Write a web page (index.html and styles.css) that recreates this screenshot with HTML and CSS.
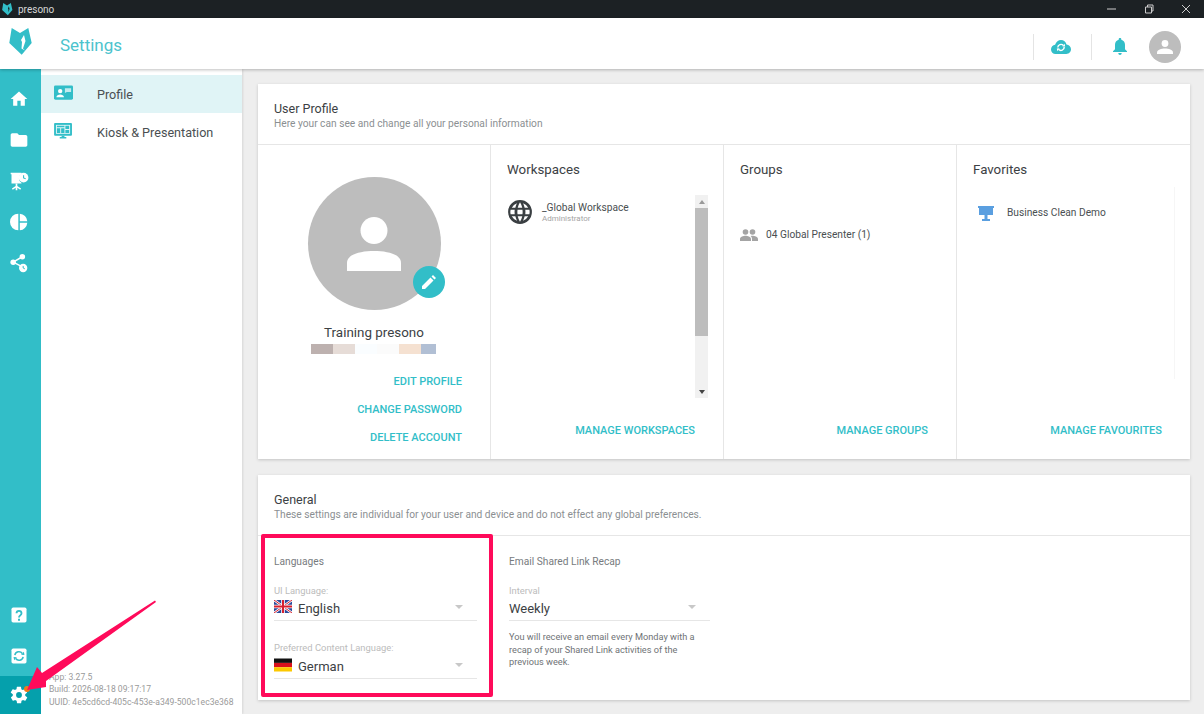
FILE: index.html
```html
<!DOCTYPE html>
<html lang="en">
<head>
    <meta charset="UTF-8">
    <meta name="viewport" content="width=device-width, initial-scale=1.0">
    <title>presono - Settings</title>
    <link rel="stylesheet" href="styles.css">
</head>
<body>

<div class="titlebar">
    <div class="titlebar-app">
        <svg class="titlebar-logo" viewBox="0 0 24 28"><path fill="#32bec8" d="M2.700 0L11 5l8.300-5 3.400 15-10 11.700L.3 15z"/><path fill="#1c2124" d="M15 7l1.500 6-2.500 7 0-6-1-2z"/></svg>
        <span>presono</span>
    </div>
    <div class="titlebar-controls">
        <svg viewBox="0 0 10 10"><path d="M0 5h9" stroke="#ccc" fill="none"/></svg>
        <svg viewBox="0 0 10 10"><path d="M1.500 3h6v6h-6zM3.500 3V1h5.500v6H7.500" stroke="#ccc" fill="none"/></svg>
        <svg viewBox="0 0 10 10"><path d="M1 1l8 8M9 1l-8 8" stroke="#ccc" fill="none"/></svg>
    </div>
</div>

<header class="topbar">
    <div class="topbar-left">
        <svg class="topbar-logo" viewBox="0 0 24 28"><path fill="#32bec8" d="M2.700 0L11 5l8.300-5 3.400 15-10 11.700L.3 15z"/><path fill="#fff" d="M15 7l1.500 6-2.500 7.500 2 2-3.500-2 .5-6.500-1-2z"/></svg>
        <h1 class="topbar-title">Settings</h1>
    </div>
    <div class="topbar-right">
        <div class="topbar-item topbar-cloud">
            <svg width="20" height="14" viewBox="0 0 20 14"><path fill="#32bec8" d="M10 0c2.700 0 5 1.900 5.500 4.600 2.500.2 4.500 2.200 4.500 4.700C20 11.900 17.900 14 15.300 14H4.500C2 14 0 12 0 9.400c0-2.400 1.800-4.300 4.100-4.600C5.200 2 7.400 0 10 0z"/><path fill="none" stroke="#fff" stroke-width="1.400" d="M6.800 7.500a3.200 3.200 0 0 1 5.600-2M13.200 7a3.200 3.200 0 0 1-5.600 2.300"/><path fill="#fff" d="M11.400 6.600l2.800-.2-.6-2.700zM8.600 8.300l-2.800.2.600 2.700z"/></svg>
        </div>
        <div class="topbar-item topbar-bell">
            <svg width="14" height="17" viewBox="0 0 14 17"><path fill="#32bec8" d="M7 0c.8 0 1.300.5 1.300 1.300v.5C10.600 2.400 12 4.300 12 6.800v4.400l2 2v.8H0v-.8l2-2V6.800c0-2.500 1.400-4.400 3.700-5v-.5C5.700.5 6.200 0 7 0zM5.300 15h3.400c0 1-.7 2-1.700 2s-1.700-1-1.700-2z"/></svg>
        </div>
        <div class="avatar-small">
            <svg width="16" height="14" viewBox="0 0 16 14"><circle cx="8" cy="3.500" r="3.400" fill="#fff"/><path fill="#fff" d="M0 14v-1.500C0 9.800 4.500 8.500 8 8.500s8 1.300 8 4V14z"/></svg>
        </div>
    </div>
</header>

<div class="main">
    <nav class="rail">
        <div class="rail-top">
            <svg class="rail-icon" viewBox="0 0 24 24"><path fill="#fff" d="M10 20v-6h4v6h5v-8h3L12 3 2 12h3v8z"/></svg>
            <svg class="rail-icon" viewBox="0 0 24 24"><path fill="#fff" d="M10 4H4c-1.100 0-2 .9-2 2v12c0 1.100.9 2 2 2h16c1.100 0 2-.9 2-2V8c0-1.100-.9-2-2-2h-8z"/></svg>
            <svg class="rail-icon" viewBox="0 0 24 24"><path fill="#fff" d="M2 2h13v1.500a6 6 0 0 0 0 10.500v1H3V4H2z"/><path fill="#fff" d="M8 15h2v3l4.500 3-1 1.400L10 20v3H8v-3l-3.500 2.400-1-1.400L8 18z"/><circle cx="17.500" cy="8" r="5.800" fill="#fff"/><path fill="none" stroke="#32bec8" stroke-width="1.300" d="M17.500 5v3.300l2.500 1"/></svg>
            <svg class="rail-icon" viewBox="0 0 24 24"><path fill="#fff" d="M11.200 2v20a10 10 0 0 1 0-20zM13 2a10 10 0 0 1 9 9h-9zM13 13h9a10 10 0 0 1-9 9z"/></svg>
            <svg class="rail-icon" viewBox="0 0 24 24"><circle cx="5" cy="11" r="3.300" fill="#fff"/><circle cx="16" cy="4.500" r="3.300" fill="#fff"/><circle cx="17" cy="18" r="5" fill="#fff"/><path stroke="#fff" stroke-width="1.800" d="M5 11l11-6.500M5 11l10 5"/><path fill="none" stroke="#32bec8" stroke-width="1.200" d="M17 15.500V18l2 1"/></svg>
        </div>
        <div class="rail-bottom">
            <div class="rail-cell">
                <svg class="rail-icon" viewBox="0 0 24 24"><rect x="3" y="3" width="18" height="18" rx="2" fill="#fff"/><path fill="none" stroke="#32bec8" stroke-width="2.200" d="M9 10c0-4 6-4 6 0 0 2.500-3 2.500-3 5"/><rect x="10.800" y="16.500" width="2.400" height="2.400" fill="#32bec8"/></svg>
            </div>
            <div class="rail-cell">
                <svg class="rail-icon" viewBox="0 0 24 24"><rect x="3" y="3" width="18" height="18" rx="2" fill="#fff"/><path fill="none" stroke="#32bec8" stroke-width="1.800" d="M7 11a5 5 0 0 1 9-2M17 13a5 5 0 0 1-9 2"/><path fill="#32bec8" d="M14.500 10.500l4 .3-.6-4zM9.500 13.500l-4-.3.6 4z"/></svg>
            </div>
            <div class="rail-cell rail-cell-active">
                <svg class="rail-icon" viewBox="0 0 24 24"><path fill="#fff" d="M19.400 13c.1-.3.100-.7.100-1s0-.7-.1-1l2.100-1.600c.2-.2.200-.4.100-.6l-2-3.500c-.1-.2-.4-.3-.6-.2l-2.500 1c-.5-.4-1.100-.7-1.700-1l-.4-2.700c0-.2-.2-.4-.5-.4h-4c-.2 0-.4.2-.5.400l-.4 2.700c-.6.200-1.200.6-1.700 1l-2.500-1c-.2-.1-.5 0-.6.200l-2 3.500c-.1.200-.1.500.1.600L4.600 11c0 .3-.1.700-.1 1s0 .7.1 1l-2.100 1.600c-.2.200-.2.400-.1.600l2 3.500c.1.200.4.300.6.200l2.500-1c.5.400 1.100.7 1.700 1l.4 2.700c0 .2.200.4.500.4h4c.2 0 .5-.2.500-.4l.4-2.700c.6-.2 1.200-.6 1.700-1l2.500 1c.2.100.5 0 .6-.2l2-3.500c.1-.2.100-.5-.1-.6zM12 15.500a3.500 3.500 0 1 1 0-7 3.500 3.500 0 0 1 0 7z"/></svg>
            </div>
        </div>
    </nav>

    <aside class="side">
        <div class="side-item side-item-active">
            <svg class="side-icon" viewBox="0 0 20 16"><rect width="20" height="15" rx="1.500" fill="#32bec8"/><circle cx="6.500" cy="6" r="2.300" fill="#fff"/><path fill="#fff" d="M2.500 12.500c0-2 2.200-3 4-3s4 1 4 3z"/><path fill="#c2ebef" d="M11.500 3H18v4h-4.500l-2 1z"/></svg>
            <span>Profile</span>
        </div>
        <div class="side-item">
            <svg class="side-icon" viewBox="0 0 20 17"><rect width="19" height="13.500" rx="1" fill="#32bec8"/><rect x="2" y="2" width="15" height="9.500" fill="#e2f5f7"/><path fill="#32bec8" d="M3 3h8v1.500H3zM12 3h4v3.500h-4zM3 5.500h3.500v5H3zM7.500 5.500h3.500v5H7.500zM12 7.500h4v3h-4z"/><path fill="#32bec8" d="M8 13.500h3v1.500h2v1.500H6V15h2z"/></svg>
            <span>Kiosk &amp; Presentation</span>
        </div>
        <div class="side-info">
            <div>App: 3.27.5</div>
            <div>Build: 2026-08-18 09:17:17</div>
            <div>UUID: 4e5cd6cd-405c-453e-a349-500c1ec3e368</div>
        </div>
    </aside>

    <main class="content">
        <section class="card">
            <div class="card-head">
                <h2>User Profile</h2>
                <p>Here your can see and change all your personal information</p>
            </div>
            <div class="profile-grid">
                <div class="profile-col">
                    <div class="avatar-large">
                        <svg width="54" height="54" viewBox="0 0 54 54"><circle cx="27" cy="13.500" r="13.500" fill="#fff"/><path fill="#fff" d="M0 54v-8c0-9 14-12 27-12s27 3 27 12v8z"/></svg>
                        <div class="avatar-edit">
                            <svg width="14" height="14" viewBox="0 0 14 14"><path fill="#fff" d="M0 14v-3l8.500-8.500 3 3L3 14zM9.500 1.500 11 0l3 3-1.500 1.500z"/></svg>
                        </div>
                    </div>
                    <div class="profile-name">Training presono</div>
                    <div class="swatches">
                        <i class="swatch-1"></i><i class="swatch-2"></i><i class="swatch-3"></i><i class="swatch-4"></i><i class="swatch-5"></i><i class="swatch-6"></i>
                    </div>
                    <div class="profile-links">
                        <a>EDIT PROFILE</a>
                        <a>CHANGE PASSWORD</a>
                        <a>DELETE ACCOUNT</a>
                    </div>
                </div>

                <div class="list-col">
                    <h3>Workspaces</h3>
                    <div class="list-body">
                        <div class="workspace">
                            <svg class="workspace-icon" width="26" height="26" viewBox="0 0 24 24"><path fill="#3a3f42" d="M12 1a11 11 0 1 0 0 22 11 11 0 0 0 0-22zm7.600 7h-3.300a17 17 0 0 0-1.500-4.100A9 9 0 0 1 19.600 8zM12 3.100c.9 1.300 1.600 3 2.100 4.900H9.900c.5-1.900 1.200-3.600 2.100-4.900zM3.300 14a9 9 0 0 1 0-4h3.800a16 16 0 0 0 0 4zm1.100 2h3.300c.4 1.500.9 2.900 1.500 4.100A9 9 0 0 1 4.400 16zm3.300-8H4.400a9 9 0 0 1 4.800-4.100C8.600 5.100 8.100 6.500 7.700 8zM12 20.900c-.9-1.300-1.600-3-2.100-4.900h4.200c-.5 1.900-1.200 3.600-2.100 4.900zm2.300-6.900H9.700a14 14 0 0 1 0-4h4.600a14 14 0 0 1 0 4zm.5 6.100c.6-1.200 1.100-2.600 1.500-4.100h3.300a9 9 0 0 1-4.800 4.100zm2.100-6.100a16 16 0 0 0 0-4h3.800a9 9 0 0 1 0 4z"/></svg>
                            <div>
                                <div class="workspace-name">_Global Workspace</div>
                                <div class="workspace-role">Administrator</div>
                            </div>
                        </div>
                        <div class="scrollbar">
                            <span class="scroll-up"></span>
                            <span class="scroll-thumb"></span>
                            <span class="scroll-down"></span>
                        </div>
                    </div>
                    <a class="list-action">MANAGE WORKSPACES</a>
                </div>

                <div class="list-col">
                    <h3>Groups</h3>
                    <div class="list-body group-body">
                        <div class="group">
                            <svg width="18" height="12" viewBox="0 0 18 12"><circle cx="5.500" cy="3" r="2.800" fill="#a4a4a4"/><circle cx="12.500" cy="3" r="2.800" fill="#a4a4a4"/><path fill="#a4a4a4" d="M0 12v-2c0-2 3.500-3.200 5.500-3.200S11 8 11 10v2zM12 12v-2c0-1.300-.6-2.300-1.500-3 .7-.2 1.400-.2 2-.2 2 0 5.500 1.200 5.500 3.200v2z"/></svg>
                            <span>04 Global Presenter (1)</span>
                        </div>
                    </div>
                    <a class="list-action">MANAGE GROUPS</a>
                </div>

                <div class="list-col">
                    <h3>Favorites</h3>
                    <div class="list-body favorite-body">
                        <div class="favorite">
                            <svg width="16" height="16" viewBox="0 0 16 16"><path fill="#5a9fe0" d="M0 0h16v2h-1v7H1V2H0zM6.500 9h3v4H12v2H4v-2h2.500z"/></svg>
                            <span>Business Clean Demo</span>
                        </div>
                    </div>
                    <a class="list-action">MANAGE FAVOURITES</a>
                </div>
            </div>
        </section>

        <section class="card">
            <div class="card-head">
                <h2>General</h2>
                <p>These settings are individual for your user and device and do not effect any global preferences.</p>
            </div>
            <div class="general-grid">
                <div class="languages">
                    <h4>Languages</h4>
                    <div class="field">
                        <label>UI Language:</label>
                        <div class="select">
                            <svg class="flag" width="18" height="13" viewBox="0 0 18 13"><rect width="18" height="13" fill="#2b4a9b"/><path stroke="#fff" stroke-width="2.400" d="M0 0l18 13M18 0L0 13"/><path stroke="#d8202f" stroke-width="1" d="M0 0l18 13M18 0L0 13"/><path stroke="#fff" stroke-width="3.600" d="M9 0v13M0 6.500h18"/><path stroke="#d8202f" stroke-width="2" d="M9 0v13M0 6.500h18"/></svg>
                            <span>English</span>
                            <i class="caret"></i>
                        </div>
                    </div>
                    <div class="field">
                        <label>Preferred Content Language:</label>
                        <div class="select">
                            <svg class="flag" width="18" height="14" viewBox="0 0 18 13"><rect width="18" height="4.400" fill="#111"/><rect y="4.400" width="18" height="4.300" fill="#d8101c"/><rect y="8.700" width="18" height="4.300" fill="#fcc800"/></svg>
                            <span>German</span>
                            <i class="caret"></i>
                        </div>
                    </div>
                </div>
                <div class="recap">
                    <h4>Email Shared Link Recap</h4>
                    <div class="field">
                        <label>Interval</label>
                        <div class="select">
                            <span>Weekly</span>
                            <i class="caret"></i>
                        </div>
                    </div>
                    <p class="recap-note">You will receive an email every Monday with a recap of your Shared Link activities of the previous week.</p>
                </div>
            </div>
        </section>
    </main>
</div>

<!-- screenshot annotations -->
<div class="mark-box"></div>
<svg class="mark-arrow" width="160" height="110" viewBox="0 0 160 110"><circle cx="27" cy="89" r="3" fill="#f07a1a"/><path fill="#ff0a5a" d="M155 0.500 156 2 46 81 46 87 27 90 37 67 42 73z"/></svg>

</body>
</html>
```

FILE: styles.css
```css
* {
    box-sizing: border-box;
}

html, body {
    height: 100%;
}

body {
    margin: 0;
    display: flex;
    flex-direction: column;
    height: 714px;
    overflow: hidden;
    font-family: Roboto, "Liberation Sans", sans-serif;
    color: #4a4f52;
    background-color: #eeeeee;
}

h1, h2, h3, h4, p {
    margin: 0;
    font-weight: 400;
}

/* window title bar */
.titlebar {
    height: 18px;
    flex-shrink: 0;
    display: flex;
    justify-content: space-between;
    align-items: center;
    background-color: #1c2124;
    color: #d6d6d6;
    font-size: 10px;
}

.titlebar-app {
    display: flex;
    align-items: center;
    gap: 5px;
    padding-left: 2px;
}

.titlebar-logo {
    width: 11px;
    height: 13px;
}

.titlebar-controls {
    display: flex;
    align-items: center;
    gap: 27px;
    padding-right: 13px;
}

.titlebar-controls svg {
    width: 10px;
    height: 10px;
}

/* app header */
.topbar {
    height: 51px;
    flex-shrink: 0;
    display: flex;
    justify-content: space-between;
    align-items: center;
    background-color: #fff;
    box-shadow: 0 1px 3px rgba(0, 0, 0, 0.25);
    position: relative;
    z-index: 2;
}

.topbar-left {
    display: flex;
    align-items: center;
    padding-left: 9px;
}

.topbar-logo {
    width: 24px;
    height: 28px;
    margin-bottom: 4px;
}

.topbar-title {
    margin-left: 27px;
    margin-top: 2px;
    font-size: 17px;
    color: #4cc3cd;
}

.topbar-right {
    display: flex;
    align-items: center;
    padding-right: 23px;
    padding-top: 6px;
}

.topbar-item {
    width: 58px;
    height: 26px;
    display: flex;
    align-items: center;
    justify-content: center;
    border-left: 1px solid #e4e4e4;
}

.topbar-cloud {
    padding-right: 4px;
}

.topbar-bell {
    padding-right: 2px;
}

.avatar-small {
    width: 32px;
    height: 32px;
    margin-left: 0;
    border-radius: 50%;
    background-color: #bdbdbd;
    display: flex;
    align-items: center;
    justify-content: center;
}

/* body */
.main {
    flex: 1;
    display: flex;
    min-height: 0;
}

.rail {
    width: 41px;
    flex-shrink: 0;
    display: flex;
    flex-direction: column;
    justify-content: space-between;
    background-color: #32bec8;
}

.rail-top {
    display: flex;
    flex-direction: column;
    align-items: center;
    gap: 21px;
    padding: 20px 3px 0 0;
}

.rail-icon {
    width: 20px;
    height: 20px;
    display: block;
}

.rail-cell {
    height: 41px;
    display: flex;
    align-items: center;
    justify-content: center;
    padding-right: 3px;
}

.rail-cell-active {
    height: 38px;
    background-color: #05a0ac;
}

.side {
    width: 201px;
    flex-shrink: 0;
    display: flex;
    flex-direction: column;
    padding-top: 6px;
    background-color: #fff;
    box-shadow: 1px 0 2px rgba(0, 0, 0, 0.1);
}

.side-item {
    height: 38px;
    flex-shrink: 0;
    display: flex;
    align-items: center;
    padding-left: 13px;
    font-size: 12.600px;
    color: #4a4f52;
}

.side-item-active {
    background-color: #e0f4f6;
}

.side-icon {
    width: 19px;
    height: 16px;
    margin-right: 24px;
    margin-top: -3px;
}

.side-info {
    margin-top: auto;
    padding: 0 0 6px 8px;
    font-size: 8.600px;
    line-height: 12.500px;
    color: #9a9a9a;
    white-space: nowrap;
}

.content {
    flex: 1;
    min-width: 0;
    display: flex;
    flex-direction: column;
    gap: 16px;
    padding: 15px 14px 0 16px;
}

.card {
    background-color: #fff;
    box-shadow: 0 1px 3px rgba(0, 0, 0, 0.18);
}

.card-head {
    height: 61px;
    padding: 18px 16px 0;
    border-bottom: 1px solid #e6e6e6;
}

.card-head h2 {
    font-size: 12.500px;
    line-height: 14px;
    color: #3c4144;
}

.card-head p {
    font-size: 10.200px;
    line-height: 14px;
    margin-top: 1px;
    color: #8b8f92;
}

/* user profile */
.profile-grid {
    height: 314px;
    display: grid;
    grid-template-columns: 232px 233px 233px 234px;
}

.profile-col {
    display: flex;
    flex-direction: column;
    align-items: center;
    padding-top: 32px;
}

.avatar-large {
    width: 133px;
    height: 133px;
    flex-shrink: 0;
    position: relative;
    border-radius: 50%;
    background-color: #bdbdbd;
    display: flex;
    align-items: center;
    justify-content: center;
}

.avatar-edit {
    position: absolute;
    right: -4px;
    bottom: 12px;
    width: 32px;
    height: 32px;
    border-radius: 50%;
    background-color: #32bec8;
    display: flex;
    align-items: center;
    justify-content: center;
}

.profile-name {
    margin-top: 15px;
    font-size: 13.400px;
    line-height: 16px;
    color: #3c4144;
}

.swatches {
    display: flex;
    height: 10px;
    margin-top: 3px;
    margin-right: 2px;
}

.swatches i {
    display: block;
    width: 22px;
}

.swatches .swatch-1 { background-color: #bdb1af; }
.swatches .swatch-2 { background-color: #e6dcd7; }
.swatches .swatch-3 { background-color: #fafdff; }
.swatches .swatch-4 { background-color: #fbfbfb; }
.swatches .swatch-5 { background-color: #f5e1d1; }
.swatches .swatch-6 { background-color: #b1bfd4; width: 15px; }

.profile-links {
    align-self: stretch;
    display: flex;
    flex-direction: column;
    align-items: flex-end;
    gap: 14px;
    padding-right: 28px;
    margin-top: 21px;
}

.profile-links a,
.list-action {
    font-size: 11px;
    font-weight: 500;
    line-height: 14px;
    color: #32bec8;
}

.list-col {
    display: flex;
    flex-direction: column;
    padding: 16px 0 0 16px;
    border-left: 1px solid #e6e6e6;
}

.list-col h3 {
    font-size: 13.300px;
    line-height: 18px;
    color: #3c4144;
}

.list-body {
    flex: 1;
    display: flex;
    justify-content: space-between;
    min-height: 0;
}

.workspace {
    display: flex;
    align-items: flex-start;
    gap: 9px;
    padding-top: 7px;
    margin-top: 15px;
}

.workspace-icon {
    margin-top: -2px;
}

.workspace-name {
    font-size: 10.200px;
    line-height: 12px;
    margin-top: 1px;
    color: #4a4f52;
}

.workspace-role {
    font-size: 8px;
    line-height: 10px;
    color: #a4a4a4;
}

.scrollbar {
    width: 13px;
    height: 203px;
    margin: 16px 15px 0 0;
    display: flex;
    flex-direction: column;
    background-color: #f1f1f1;
}

.scroll-up,
.scroll-down {
    flex-shrink: 0;
    margin: 0 auto;
    width: 0;
    height: 0;
    border: 3px solid transparent;
}

.scroll-up {
    border-top: 0;
    border-bottom: 4px solid #9a9a9a;
    margin-top: 5px;
    margin-bottom: 4px;
}

.scroll-thumb {
    height: 128px;
    flex-shrink: 0;
    background-color: #bdbdbd;
}

.scroll-down {
    border-bottom: 0;
    border-top: 4px solid #444;
    margin-top: auto;
    margin-bottom: 4px;
}

.group-body {
    padding-top: 49px;
}

.group {
    display: flex;
    align-items: flex-start;
    gap: 8px;
    font-size: 10.200px;
    line-height: 14px;
    color: #4a4f52;
}

.group svg {
    margin-top: 1px;
}

.favorite-body {
    padding-top: 19px;
    padding-left: 5px;
    margin-right: 15px;
    margin-top: 8px;
    margin-bottom: 45px;
    border-right: 1px solid #f6f6f6;
}

.favorite {
    display: flex;
    align-items: flex-start;
    gap: 13px;
    font-size: 10.200px;
    line-height: 14px;
    color: #4a4f52;
}

.list-action {
    align-self: flex-end;
    margin-right: 28px;
    margin-bottom: 21px;
}

/* general */
.general-grid {
    height: 164px;
    display: flex;
    padding: 19px 16px 0;
}

.languages {
    width: 203px;
}

.recap {
    width: 201px;
    margin-left: 32px;
}

.languages h4,
.recap h4 {
    font-size: 10.200px;
    line-height: 14px;
    color: #777b7e;
}

.field {
    margin-top: 16px;
}

.field + .field {
    margin-top: 21px;
}

.field + .field .select {
    margin-top: 1px;
}

.field label {
    display: block;
    font-size: 9.400px;
    line-height: 12px;
    color: #bcbcbc;
}

.select {
    height: 24px;
    display: flex;
    align-items: center;
    gap: 6px;
    font-size: 13px;
    color: #3c4144;
    border-bottom: 1px solid #e6e6e6;
    padding-bottom: 1px;
}

.flag {
    margin-top: -3px;
}

.caret {
    margin-left: auto;
    margin-right: 14px;
    margin-top: -3px;
    width: 0;
    height: 0;
    border: 4px solid transparent;
    border-top: 4px solid #c8c8c8;
    border-bottom: 0;
}

.recap-note {
    margin-top: 10px;
    font-size: 9.200px;
    line-height: 12.500px;
    color: #6f7376;
}

/* red annotations drawn over the shot */
.mark-box {
    position: absolute;
    left: 261px;
    top: 534px;
    width: 232px;
    height: 163px;
    border: 4.500px solid #ff0a5a;
    border-radius: 2px;
}

.mark-arrow {
    position: absolute;
    left: 0;
    top: 600px;
}
```
